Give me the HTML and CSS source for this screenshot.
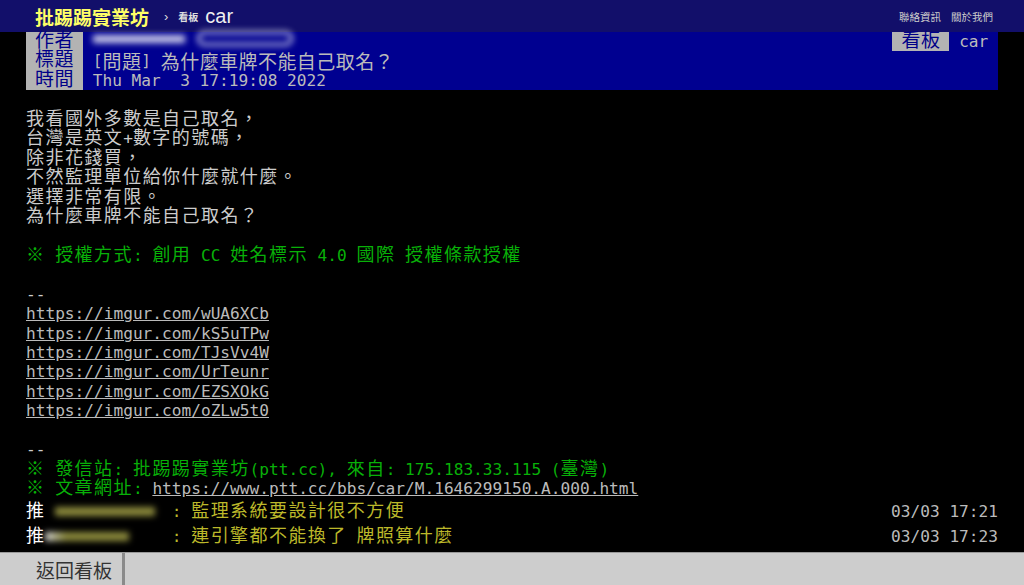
FILE: index.html
```html
<!DOCTYPE html>
<html lang="zh-Hant">
<head>
    <meta charset="UTF-8">
    <title>[問題] 為什麼車牌不能自己取名？ - 看板 car - 批踢踢實業坊</title>
    <link rel="stylesheet" href="styles.css">
</head>
<body>
    <div class="topbar">
        <span class="site-name">批踢踢實業坊</span>
        <span class="crumb-sep">›</span>
        <span class="crumb-label">看板</span>
        <span class="crumb-board">car</span>
        <div class="top-links">
            <span>聯絡資訊</span>
            <span>關於我們</span>
        </div>
    </div>

    <div class="main">
        <div class="meta">
            <div class="meta-row">
                <span class="tag"><span class="w">作者</span></span>
                <span class="value"><span class="smear smear-a"></span><span class="smear smear-b"></span></span>
                <span class="meta-right">
                    <span class="tag"><span class="w">看板</span></span>
                    <span class="value value-right">car</span>
                </span>
            </div>
            <div class="meta-row">
                <span class="tag"><span class="w">標題</span></span>
                <span class="value">[<span class="w">問題</span>] <span class="w">為什麼車牌不能自己取名？</span></span>
            </div>
            <div class="meta-row">
                <span class="tag"><span class="w">時間</span></span>
                <span class="value">Thu Mar  3 17:19:08 2022</span>
            </div>
        </div>

        <div class="line"></div>
        <div class="line"><span class="w">我看國外多數是自己取名，</span></div>
        <div class="line"><span class="w">台灣是英文</span>+<span class="w">數字的號碼，</span></div>
        <div class="line"><span class="w">除非花錢買，</span></div>
        <div class="line"><span class="w">不然監理單位給你什麼就什麼。</span></div>
        <div class="line"><span class="w">選擇非常有限。</span></div>
        <div class="line"><span class="w">為什麼車牌不能自己取名？</span></div>
        <div class="line"></div>
        <div class="line green"><span class="w">※</span> <span class="w">授權方式</span>: <span class="w">創用</span> CC <span class="w">姓名標示</span> 4.0 <span class="w">國際</span> <span class="w">授權條款授權</span></div>
        <div class="line"></div>
        <div class="line">--</div>
        <div class="line"><a class="link">https://imgur.com/wUA6XCb</a></div>
        <div class="line"><a class="link">https://imgur.com/kS5uTPw</a></div>
        <div class="line"><a class="link">https://imgur.com/TJsVv4W</a></div>
        <div class="line"><a class="link">https://imgur.com/UrTeunr</a></div>
        <div class="line"><a class="link">https://imgur.com/EZSXOkG</a></div>
        <div class="line"><a class="link">https://imgur.com/oZLw5t0</a></div>
        <div class="line"></div>
        <div class="line">--</div>
        <div class="line green"><span class="w">※</span> <span class="w">發信站</span>: <span class="w">批踢踢實業坊</span>(ptt.cc), <span class="w">來自</span>: 175.183.33.115 (<span class="w">臺灣</span>)</div>
        <div class="line green"><span class="w">※</span> <span class="w">文章網址</span>: <a class="link">https://www.ptt.cc/bbs/car/M.1646299150.A.000.html</a></div>

        <div class="push">
            <span class="push-tag"><span class="w">推</span> </span>
            <span class="push-userid"><span class="smear smear-id"></span></span>
            <span class="push-content">: <span class="w">監理系統要設計很不方便</span></span>
            <span class="push-time">03/03 17:21</span>
        </div>
        <div class="push">
            <span class="push-tag"><span class="w">推</span> </span>
            <span class="push-userid"><span class="smear smear-id2"></span></span>
            <span class="push-content">: <span class="w">連引擎都不能換了</span> <span class="w">牌照算什麼</span></span>
            <span class="push-time">03/03 17:23</span>
        </div>
    </div>

    <div class="bottombar">
        <div class="bar-inner">
            <span class="back-btn">返回看板</span>
        </div>
    </div>
</body>
</html>
```

FILE: styles.css
```css
body {
    margin: 0;
    background: #000;
    color: #ccc;
    font-family: "DejaVu Sans Mono", monospace;
    overflow: hidden;
}

/* top bar */
.topbar {
    height: 32px;
    background: #120f6a;
    display: flex;
    align-items: center;
    padding: 0 31px 0 35px;
    font-family: "Liberation Sans", "Noto Sans CJK TC", sans-serif;
}

.site-name {
    color: #ff6;
    font-size: 19px;
    font-weight: bold;
    font-family: "Noto Sans CJK TC", sans-serif;
}

.crumb-sep {
    color: #ddd;
    font-size: 13px;
    margin: 0 10px 0 15px;
}

.crumb-label {
    color: #ddd;
    font-size: 10px;
    font-weight: bold;
    font-family: "Noto Sans CJK TC", sans-serif;
}

.crumb-board {
    color: #eee;
    font-size: 20px;
    margin-left: 7px;
}

.top-links {
    margin-left: auto;
    display: flex;
    gap: 10px;
    font-size: 10.5px;
    color: #ccc;
    font-family: "Noto Sans CJK TC", sans-serif;
}

/* article */
.main {
    width: 972px;
    margin: 0 auto;
    font-size: 16.15px;
}

.w {
    font-family: "Noto Sans CJK TC", sans-serif;
    font-size: 18px;
    letter-spacing: 1.44px;
    line-height: 0;
}

.line {
    height: 19.44px;
    line-height: 19.44px;
    white-space: pre;
}

.green {
    color: #08b008;
}

.link {
    color: #bbb;
    text-decoration: underline;
}

.meta-row {
    display: flex;
    height: 19.44px;
    line-height: 19.44px;
    background: #000090;
    white-space: pre;
}

.meta .w {
    font-size: 19px;
    letter-spacing: 0.44px;
}

.tag {
    width: 57px;
    text-align: center;
    background: #b3b3b3;
    color: #000088;
}

.value {
    padding: 0 9.72px;
    color: #bbb;
    display: flex;
    align-items: center;
}

.meta-right {
    margin-left: auto;
    display: flex;
}

.smear {
    display: inline-block;
    filter: blur(3px);
}

.smear-a {
    width: 92px;
    height: 8px;
    margin-top: -6px;
    background: #c8c8e8;
}

.smear-b {
    width: 90px;
    height: 9px;
    margin: -6px 0 0 12px;
    border: 3px solid #c8c8e8;
    border-radius: 8px;
}

/* pushes */
.push {
    display: flex;
    height: 25px;
    line-height: 25px;
    white-space: pre;
}

.push-tag {
    color: #fff;
}

.push-userid {
    width: 116.64px;
    display: flex;
    align-items: center;
}

.smear-id {
    width: 100px;
    height: 9px;
    background: #8c8a3c;
}

.smear-id2 {
    width: 84px;
    height: 9px;
    margin-left: -10px;
    background: linear-gradient(to right, #ddd, #8c8a3c 25%, #8c8a3c);
}

.push-content {
    color: #bcb82a;
}

.push-time {
    margin-left: auto;
    color: #bbb;
}

/* bottom bar */
.bottombar {
    position: fixed;
    left: 0;
    right: 0;
    bottom: 0;
    height: 33px;
    box-sizing: border-box;
    background: #cdcdcd;
    border-top: 1px solid #999;
}

.bar-inner {
    width: 972px;
    margin: 0 auto;
    height: 100%;
    display: flex;
}

.back-btn {
    display: flex;
    align-items: center;
    padding: 0 10px;
    border-right: 3px solid #8a8a8a;
    font-size: 19px;
    color: #333;
    font-family: "Noto Sans CJK TC", sans-serif;
}
```
